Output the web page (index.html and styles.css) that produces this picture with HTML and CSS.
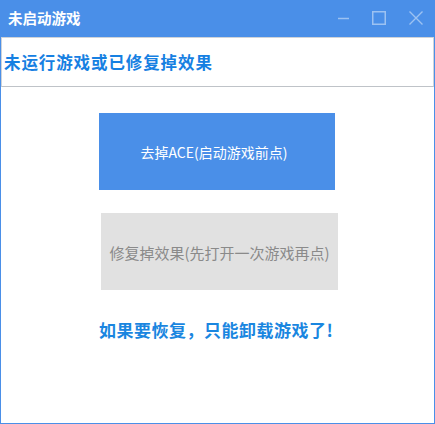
FILE: index.html
```html
<!DOCTYPE html>
<html>
<head>
<meta charset="utf-8">
<link rel="stylesheet" href="styles.css">
</head>
<body>
<div class="window">
  <div class="titlebar">
    <span class="title">未启动游戏</span>
    <div class="controls">
      <svg class="ctl ctl-min" width="14" height="14" viewBox="0 0 14 14"><line x1="2" y1="7.5" x2="13" y2="7.5" stroke="#9cc2f2" stroke-width="1.5"/></svg>
      <svg class="ctl ctl-max" width="16" height="16" viewBox="0 0 16 16"><rect x="1.75" y="1.75" width="12.5" height="12.5" fill="none" stroke="#9cc2f2" stroke-width="1.5"/></svg>
      <svg class="ctl ctl-close" width="16" height="16" viewBox="0 0 16 16"><path d="M1.5 1.5 L14.5 14.5 M14.5 1.5 L1.5 14.5" stroke="#9cc2f2" stroke-width="1.4"/></svg>
    </div>
  </div>
  <div class="body">
    <div class="status">未运行游戏或已修复掉效果</div>
    <div class="main">
      <div class="btn btn-primary">去掉ACE(启动游戏前点)</div>
      <div class="btn btn-gray">修复掉效果(先打开一次游戏再点)</div>
      <div class="note">如果要恢复，只能卸载游戏了!</div>
    </div>
  </div>
</div>
</body>
</html>
```
FILE: styles.css
```css
html, body { margin: 0; padding: 0; }
body {
  font-family: "Noto Sans CJK SC", "Liberation Sans", sans-serif;
  background: #ffffff;
}
.window {
  width: 435px;
  height: 424px;
  box-sizing: border-box;
  background: #4a8fe8;
  padding: 0 1px 1px 1px;
  display: flex;
  flex-direction: column;
}
.titlebar {
  height: 37px;
  flex: none;
  display: flex;
  align-items: center;
  padding-left: 7px;
  color: #ffffff;
}
.title {
  font-size: 14.5px;
  font-weight: 700;
  line-height: 1;
  margin-top: -1px;
}
.controls {
  margin-left: auto;
  display: flex;
  align-items: center;
  margin-top: -1px;
}
.ctl { display: block; }
.ctl-min { margin-right: 21px; }
.ctl-max { margin-right: 21px; }
.ctl-close { margin-right: 10px; }
.body {
  flex: 1;
  background: #ffffff;
  display: flex;
  flex-direction: column;
}
.status {
  height: 50px;
  box-sizing: border-box;
  border: 1px solid #cfd3d8;
  border-bottom-color: #bfc3c8;
  display: flex;
  align-items: center;
  padding-left: 2px;
  padding-bottom: 1px;
  font-size: 16.5px;
  font-weight: 700;
  color: #1680e2;
  letter-spacing: 0.9px;
}
.main {
  display: flex;
  flex-direction: column;
}
.btn {
  height: 77px;
  display: flex;
  align-items: center;
  justify-content: center;
  box-sizing: border-box;
  padding-top: 1px;
}
.btn-primary {
  width: 236px;
  margin: 26px 0 0 98px;
  background: #4a8fe8;
  color: #ffffff;
  font-size: 14px;
  padding-right: 6px;
}
.btn-gray {
  width: 237px;
  margin: 23px 0 0 100px;
  background: #e1e1e1;
  color: #8a8a8a;
  font-size: 15px;
}
.note {
  margin: 29px 0 0 98px;
  font-size: 17px;
  font-weight: 700;
  color: #1a86e0;
  line-height: 22px;
  letter-spacing: 0.5px;
}
```
